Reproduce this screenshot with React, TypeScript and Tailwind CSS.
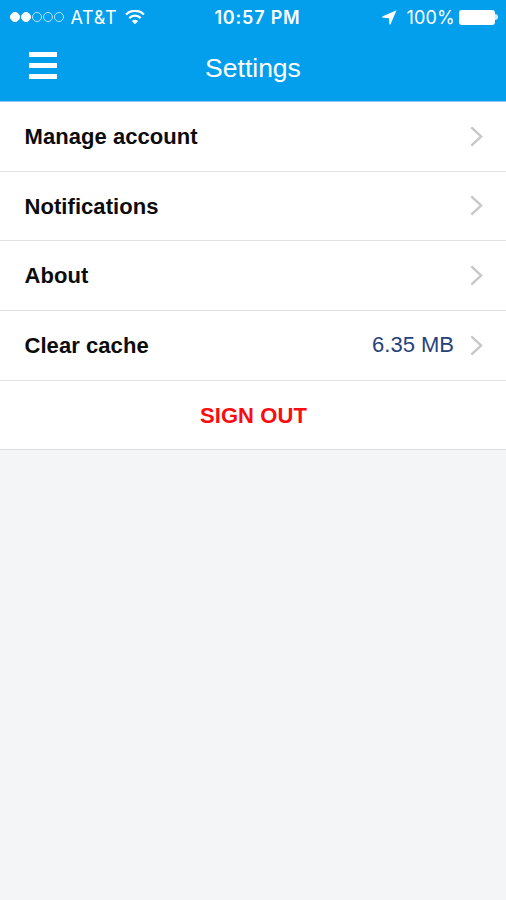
import type { ReactNode } from 'react';

interface RowProps {
  label: string;
  value?: string;
  height: string;
}

function Dot({ filled }: { filled: boolean }) {
  return (
    <span
      className={`size-[9.5px] rounded-full border ${
        filled ? 'border-white bg-white' : 'border-white/70'
      }`}
    />
  );
}

function WifiIcon() {
  return (
    <svg width="20" height="15" viewBox="0 0 20 15" fill="none" stroke="#fff">
      <path d="M1.1 4.5a12.6 12.6 0 0 1 17.8 0" strokeWidth="2.4" />
      <path d="M4.3 8.1a8 8 0 0 1 11.4 0" strokeWidth="2.3" />
      <path d="M10 14.2 6.8 11a4.5 4.5 0 0 1 6.4 0z" fill="#fff" stroke="none" />
    </svg>
  );
}

function LocationIcon() {
  return (
    <svg width="15" height="15" viewBox="0 0 15 15" fill="#fff">
      <path d="M14.6.2 8.4 14.4h-1L7 8.2.2 7.4v-1z" />
    </svg>
  );
}

function Chevron() {
  return (
    <svg width="14" height="22" viewBox="0 0 14 22" fill="none" stroke="#c7c7c7" strokeWidth="2.4">
      <path d="m1.3 1.3 9.8 9.2-9.8 9.2" />
    </svg>
  );
}

function Battery() {
  return (
    <div className="flex items-center">
      <span className="h-[15px] w-9 rounded-[3px] border border-white/80 bg-white" />
      <span className="h-[6px] w-[3px] rounded-r-full bg-white/80" />
    </div>
  );
}

function StatusText({ children, className }: { children: ReactNode; className: string }) {
  return (
    <span className={`font-[Inter,sans-serif] text-[18px] whitespace-nowrap text-white ${className}`}>
      {children}
    </span>
  );
}

function StatusBar() {
  return (
    <div className="grid h-[34px] grid-cols-3 items-center pr-[8px] pl-[10px]">
      <div className="flex items-center">
        <div className="flex gap-[1.5px]">
          {[0, 1, 2, 3, 4].map((i) => <Dot key={i} filled={i < 2} />)}
        </div>
        <StatusText className="ml-[7px] tracking-[0.7px]">AT&amp;T</StatusText>
        <span className="ml-[8px]"><WifiIcon /></span>
      </div>
      <StatusText className="pl-[7px] text-center font-semibold tracking-[0.8px]">10:57 PM</StatusText>
      <div className="flex items-center justify-end">
        <LocationIcon />
        <StatusText className="mr-[4px] ml-[9px] tracking-[0.2px]">100%</StatusText>
        <Battery />
      </div>
    </div>
  );
}

function SettingsRow({ label, value, height }: RowProps) {
  return (
    <button className={`flex w-full items-center justify-between border-b border-[#e2e2e2] bg-white pr-[22px] pl-[24.5px] ${height}`}>
      <span className="text-[22px] font-bold tracking-[0.06px] text-[#0c0c0c]">{label}</span>
      <span className="flex items-center gap-[16px]">
        {value && <span className="pb-[2px] text-[22px] text-[#26427d]">{value}</span>}
        <Chevron />
      </span>
    </button>
  );
}

const rows: RowProps[] = [
  { label: 'Manage account', height: 'h-[70px]' },
  { label: 'Notifications', height: 'h-[69px]' },
  { label: 'About', height: 'h-[70px]' },
  { label: 'Clear cache', value: '6.35 MB', height: 'h-[70px]' },
];

export default function App() {
  return (
    <div className="min-h-screen w-full bg-[#f3f5f7] font-['Liberation_Sans',Arial,sans-serif]">
      <header className="h-[102px] border-b border-[#90c9f0] bg-[#039eec]">
        <StatusBar />
        <div className="grid h-[67px] grid-cols-[100px_1fr_100px] items-center">
          <button aria-label="Menu" className="mb-[5px] ml-[29px] flex w-7 flex-col gap-[6px]">
            <span className="h-[5px] bg-white" />
            <span className="h-[5px] bg-white" />
            <span className="h-[5px] bg-white" />
          </button>
          <h1 className="pt-[2px] text-center text-[26.5px] text-white">Settings</h1>
        </div>
      </header>
      <main>
        {rows.map((row) => <SettingsRow key={row.label} {...row} />)}
        <button className="flex h-[69px] w-full items-center justify-center border-b border-[#dcdedf] bg-white pl-px text-[22px] font-bold tracking-[0.1px] text-[#f90d10]">
          SIGN OUT
        </button>
      </main>
    </div>
  );
}
